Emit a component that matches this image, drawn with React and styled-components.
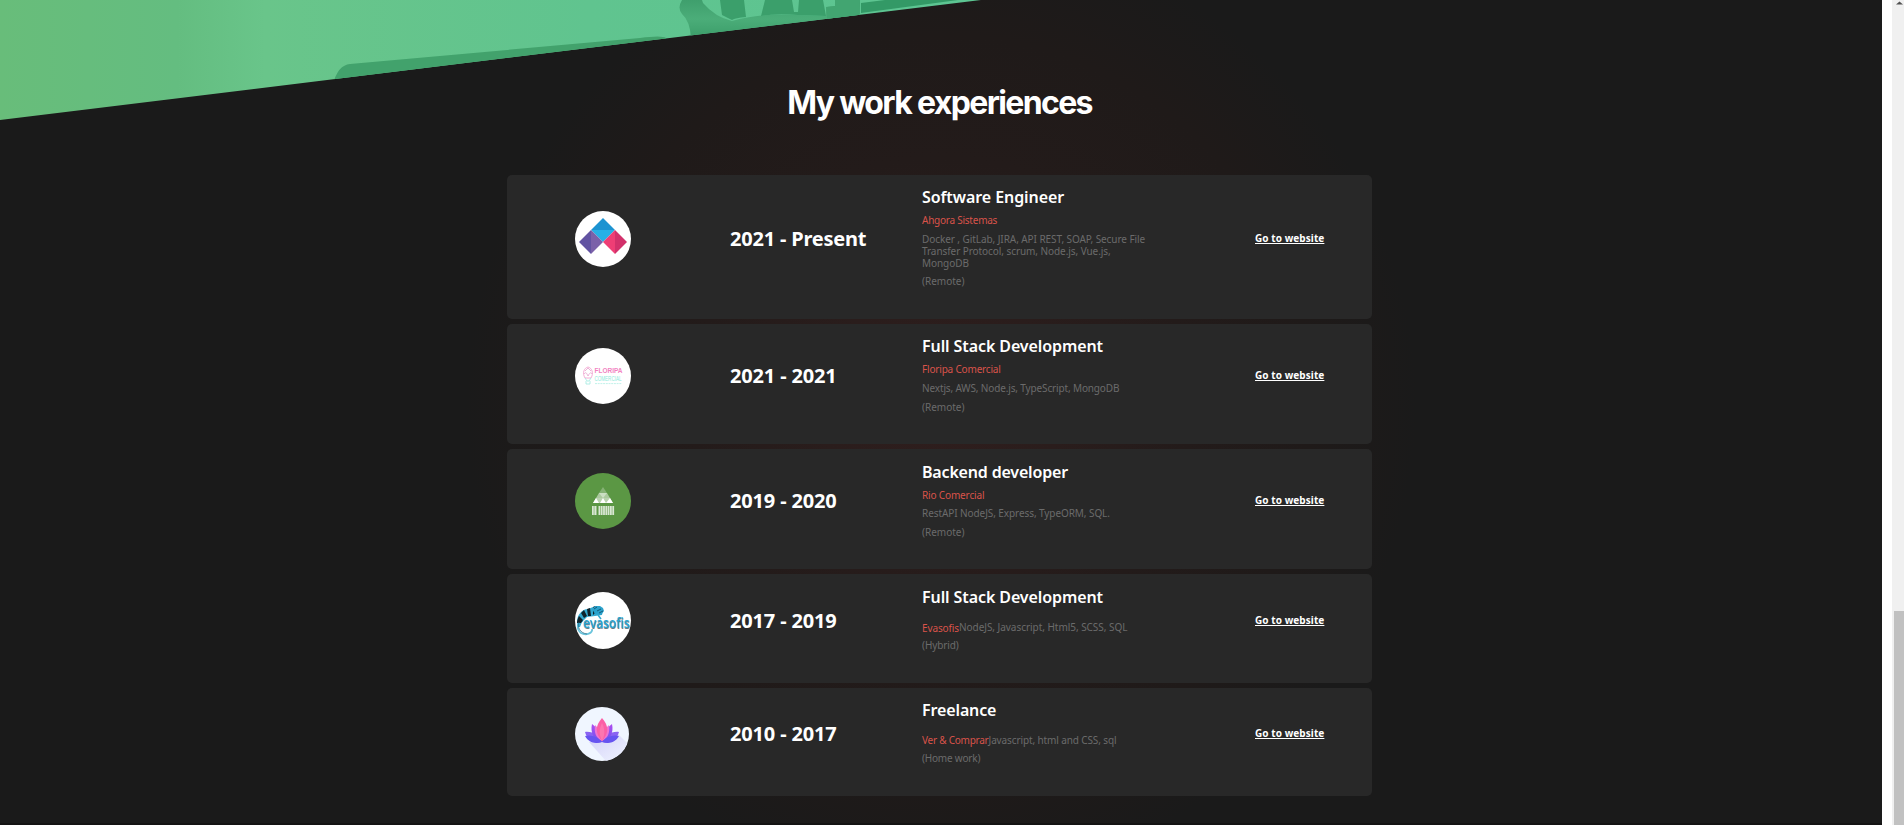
import React from 'react';
import styled, { createGlobalStyle } from 'styled-components';

const GlobalStyle = createGlobalStyle`
  * { box-sizing: border-box; }
  html, body { margin: 0; height: 100%; overflow: hidden; background: #fff; }
  body { font-family: 'Noto Sans', 'Open Sans', sans-serif; }
`;

const Window = styled.div`
  display: flex;
  width: 1904px;
  height: 825px;
  background: #fff;
`;

const Page = styled.main`
  position: relative;
  width: 1882px;
  height: 825px;
  overflow: hidden;
  background:
    radial-gradient(circle 475px at 941px 405px, #2f1e1d 0%, #2a1d1c 25%, #231b1a 52%, #1f1a19 78%, #1a1a1a 100%),
    #1a1a1a;
  border-bottom: 2px solid #141313;
`;

const Banner = styled.svg`
  position: absolute;
  top: 0;
  left: 0;
`;

const Section = styled.section`
  position: relative;
  display: flex;
  flex-direction: column;
  align-items: center;
  padding-top: 82px;
`;

const Heading = styled.h2`
  margin: 0 3px 51px 0;
  height: 42px;
  font: 700 32px/42px Inter, sans-serif;
  letter-spacing: -1.65px;
  color: #fff;
  white-space: nowrap;
`;

const List = styled.div`
  display: flex;
  flex-direction: column;
  gap: 5px;
  width: 865px;
  margin-right: 3px;
`;

const Card = styled.article`
  display: grid;
  grid-template-columns: 155px 192px 229px 1fr;
  height: ${(p) => p.$height}px;
  padding: 0 0 16px 68px;
  align-items: center;
  border-radius: 5px;
  background: #282828;
`;

const Logo = styled.svg`
  display: block;
  overflow: visible;
  width: ${(p) => p.$size || 56}px;
  height: ${(p) => p.$size || 56}px;
`;

const Period = styled.div`
  font-size: 20px;
  line-height: 28px;
  font-weight: 700;
  letter-spacing: ${(p) => p.$track || 0}px;
  color: #fff;
  white-space: nowrap;
`;

const Details = styled.div`
  align-self: start;
  padding-top: ${(p) => p.$top}px;
`;

const Role = styled.h3`
  margin: 0;
  font-size: 16px;
  line-height: 22px;
  font-weight: 600;
  letter-spacing: ${(p) => p.$track || 0}px;
  color: #fff;
  white-space: nowrap;
`;

const Company = styled.div`
  margin-top: 6px;
  font-size: 10px;
  line-height: 12px;
  letter-spacing: ${(p) => p.$track || 0}px;
  color: #d9534a;
  white-space: nowrap;
`;

const Stack = styled.p`
  margin: ${(p) => p.$gap || 7}px 0 0;
  font-size: 10px;
  line-height: 12px;
  letter-spacing: ${(p) => p.$track || 0}px;
  color: #6b6b6b;
`;

const Inline = styled.div`
  display: flex;
  align-items: flex-start;
  margin-top: 13px;
  white-space: nowrap;
  & > ${Company} { margin: ${(p) => p.$drop}px 0 ${(p) => -p.$drop}px; }
  & > ${Stack} { margin-top: 0; }
`;

const Link = styled.a`
  justify-self: start;
  margin: 0 0 2px 104px;
  font-size: 10px;
  line-height: 14px;
  font-weight: 700;
  letter-spacing: 0.07px;
  color: #fff;
  text-decoration: underline;
  white-space: nowrap;
`;

const Gutter = styled.div`
  width: 10px;
  background: #fff;
`;

const Scrollbar = styled.div`
  display: flex;
  flex-direction: column;
  justify-content: space-between;
  width: 12px;
  background: #f0f0f0;
`;

const Arrow = styled.svg`
  display: block;
  width: 12px;
  height: 8px;
`;

const Thumb = styled.div`
  height: 214px;
  margin-left: 2px;
  background: #c1c1c1;
`;

const PrismLogo = () => (
  <Logo viewBox="0 0 56 56">
    <circle cx="28" cy="28" r="28" fill="#fff" />
    <path d="M28 7 40 19H16z" fill="#1c93d1" />
    <path d="M16 19H40L28 31z" fill="#27b0e6" />
    <path d="M16 19V43L4 31z" fill="#6253a2" />
    <path d="M16 19 28 31 16 43z" fill="#7b61a9" />
    <path d="M40 19V43L28 31z" fill="#ee3e75" />
    <path d="M40 19 52 31 40 43z" fill="#d2316b" />
  </Logo>
);

const FloripaLogo = () => (
  <Logo viewBox="0 0 56 56">
    <circle cx="28" cy="28" r="28" fill="#fff" />
    <g fill="none" strokeWidth=".8">
      <path d="M10 30C7 25 9 20 13 19C17 20 19 25 16 30z" stroke="#f19acb" />
      <path d="M10 23 13 20 16 23M9 26C11 23 12 26 13 28C14 26 16 23 17 26" stroke="#e7a0cd" />
      <path d="M10 30 12 33H14L16 30M11 33V36H15V33" stroke="#9eeadf" />
    </g>
    <text x="19.5" y="24.8" fontFamily="Liberation Sans" fontWeight="700" fontSize="7" textLength="28" lengthAdjust="spacingAndGlyphs" fill="#f283c2">FLORIPA</text>
    <text x="19.5" y="32.8" fontFamily="Liberation Sans" fontSize="8" textLength="27" lengthAdjust="spacingAndGlyphs" fill="#8eeadb">COMERCIAL</text>
    <path d="M20 35.6H47" stroke="#c2f2ea" strokeWidth="1" strokeDasharray="2 .7" />
  </Logo>
);

const RioLogo = () => (
  <Logo viewBox="0 0 56 56">
    <circle cx="28" cy="28" r="28" fill="#5b9744" />
    <path d="M28 14 32 20H24z" fill="#86b275" />
    <path d="M24 20H32L35 25H21z" fill="#abc99e" />
    <path d="M24 20 28 25 32 20z" fill="#cbdfc3" />
    <path d="M21 25H35L38 30H18z" fill="#b9d2ae" />
    <path d="M21 25 24 30H18zM35 25 38 30H31zM28 25 31 30H25z" fill="#fff" />
    <path d="M17 37.5H22M23.5 37.5H39.5" stroke="#d9e7d3" strokeWidth="9" strokeDasharray="1.8 .5" />
  </Logo>
);

const EvasofisLogo = () => (
  <Logo viewBox="0 0 57 57" $size={57}>
    <ellipse cx="28" cy="28.5" rx="28" ry="28.5" fill="#fff" />
    <path d="M8 29C2 29 1 37 6 41C11 44 18 41 17 37" fill="none" stroke="#69c4dc" strokeWidth="1.8" />
    <path d="M2 30C2 23 7 17 13 17L18 15 24 16 28 18 27 23 20 24 12 25 7 30 5 35 3 35z" fill="#35a9cf" />
    <path d="M2 31C2 28 3 26 4 24L8 28 6 31zM6 21 9 18 12 24 9 26zM12 17 15 16 16 24 13 24zM18 15 20 14 21 20 18 23z" fill="#10232b" />
    <path d="M17 17 20 14 25 14 28 16 29 19 26 23 20 22z" fill="#2ba2cc" />
    <path d="M19 17 22 15M22 19 26 17M24 21 28 19" stroke="#155a78" strokeWidth="1" />
    <path d="M23 23 26 27" stroke="#35a9cf" strokeWidth="1.5" />
    <path d="M4 30C2 35 5 41 12 42" fill="none" stroke="#2c6981" strokeWidth=".7" />
    <text x="8" y="36.2" fontFamily="Open Sans" fontWeight="600" fontSize="14" textLength="46.5" lengthAdjust="spacingAndGlyphs" fill="#29a4d0" style={{ textShadow: '0.5px 0.5px 0 #6d7d86' }}>evasofis</text>
  </Logo>
);

const LotusLogo = () => (
  <Logo viewBox="0 0 54 54" $size={54}>
    <defs>
      <linearGradient id="petal" x1="0" y1="0" x2="0" y2="1">
        <stop offset="0" stopColor="#b04df0" />
        <stop offset="1" stopColor="#6a55ee" />
      </linearGradient>
      <linearGradient id="shade" x1="0" y1="0" x2="1" y2="1">
        <stop offset="0" stopColor="#d3d0f8" />
        <stop offset="1" stopColor="#f0f5ff" />
      </linearGradient>
      <clipPath id="disc"><circle cx="27" cy="27" r="27" /></clipPath>
    </defs>
    <circle cx="27" cy="27" r="27" fill="#f0f6ff" />
    <path d="M14 35 43 27 54 38 45 54H31z" fill="url(#shade)" clipPath="url(#disc)" />
    <path d="M10 25C18 24 24 29 27 35C20 37 13 35 10 25zM44 25C36 24 30 29 27 35C34 37 41 35 44 25z" fill="#8a63f2" />
    <path d="M17 17C23 21 26 28 27 35C19 33 15 26 17 17zM37 17C31 21 28 28 27 35C35 33 39 26 37 17z" fill="url(#petal)" />
    <path d="M20 18C25 22 27 29 27 34C21 31 19 26 20 18zM34 18C29 22 27 29 27 34C33 31 35 26 34 18z" fill="#ee74d2" />
    <path d="M27 11C34 19 34 26 27 34C20 26 20 19 27 11z" fill="#fb5fa6" />
    <path d="M27 16C30 22 30 28 27 34C24 28 24 22 27 16z" fill="#fd76b0" />
    <path d="M10 29C17 27 24 31 27 35C20 37 14 36 10 29zM44 29C37 27 30 31 27 35C34 37 40 36 44 29z" fill="#6654f0" />
  </Logo>
);

const jobs = [
  { logo: PrismLogo, height: 144, top: 11, placeGap: 6, period: '2021 - Present', role: 'Software Engineer', company: 'Ahgora Sistemas', stack: 'Docker , GitLab, JIRA, API REST, SOAP, Secure File Transfer Protocol, scrum, Node.js, Vue.js, MongoDB', place: '(Remote)', track: [-0.2, -0.08, -0.24, -0.07, 0] },
  { logo: FloripaLogo, height: 120, top: 11, period: '2021 - 2021', role: 'Full Stack Development', company: 'Floripa Comercial', stack: 'Nextjs, AWS, Node.js, TypeScript, MongoDB', place: '(Remote)', track: [-0.16, -0.09, -0.18, -0.14, 0] },
  { logo: RioLogo, height: 120, top: 12, stackGap: 6, period: '2019 - 2020', role: 'Backend developer', company: 'Rio Comercial', stack: 'RestAPI NodeJS, Express, TypeORM, SQL.', place: '(Remote)', track: [-0.16, -0.18, -0.15, -0.08, 0] },
  { logo: EvasofisLogo, height: 109, top: 12, inline: true, drop: 1, placeGap: 6, period: '2017 - 2019', role: 'Full Stack Development', company: 'Evasofis', stack: 'NodeJS, Javascript, Html5, SCSS, SQL', place: '(Hybrid)', track: [-0.16, -0.09, -0.12, -0.04, -0.1] },
  { logo: LotusLogo, height: 108, top: 11, inline: true, drop: 0, placeGap: 6, period: '2010 - 2017', role: 'Freelance', company: 'Ver & Comprar', stack: 'Javascript, html and CSS, sql', place: '(Home work)', track: [-0.16, -0.12, -0.24, -0.12, -0.2] },
];

const Job = ({ job }) => {
  const Mark = job.logo;
  const [periodTrack, roleTrack, companyTrack, stackTrack, placeTrack] = job.track;
  const company = <Company $track={companyTrack}>{job.company}</Company>;
  const stack = <Stack $gap={job.stackGap} $track={stackTrack}>{job.stack}</Stack>;
  return (
    <Card $height={job.height}>
      <Mark />
      <Period $track={periodTrack}>{job.period}</Period>
      <Details $top={job.top}>
        <Role $track={roleTrack}>{job.role}</Role>
        {job.inline ? <Inline $drop={job.drop}>{company}{stack}</Inline> : <>{company}{stack}</>}
        <Stack $gap={job.placeGap} $track={placeTrack}>{job.place}</Stack>
      </Details>
      <Link>Go to website</Link>
    </Card>
  );
};

export default function App() {
  return (
    <Window>
      <GlobalStyle />
      <Page>
        <Banner width="981" height="120" viewBox="0 0 981 120">
          <defs>
            <linearGradient id="green" x1="0" x2="1">
              <stop offset="0" stopColor="#68bd7a" />
              <stop offset=".18" stopColor="#64bd80" />
              <stop offset=".27" stopColor="#69c58a" />
              <stop offset=".6" stopColor="#60c48f" />
              <stop offset="1" stopColor="#5cc592" />
            </linearGradient>
            <linearGradient id="hand" x1="0" y1="0" x2="0" y2="1">
              <stop offset="0" stopColor="#3f9f6d" />
              <stop offset=".5" stopColor="#4bad79" />
              <stop offset="1" stopColor="#3b9d69" />
            </linearGradient>
            <clipPath id="slant"><path d="M0 0H981L0 120z" /></clipPath>
          </defs>
          <g clipPath="url(#slant)">
            <path d="M0 0H981V120H0z" fill="url(#green)" />
            <path d="M333 84Q338 65 350 64L640 38Q662 35 666 38L660 90H333z" fill="#42a26c" />
            <path d="M682 0Q677 8 682 14Q690 21 691 38H760L860 18V0H835V6L826 7V16L798 15Q760 13 732 21Q715 17 703 3L702 0z" fill="url(#hand)" />
            <path d="M720 0H744L746 17Q735 18 732 20L722 15zM765 0H792L794 12H798L799 0H823L826 16L798 15Q776 13 761 16z" fill="#3b9f6b" />
            <path d="M827 7 835 6V0H860L859 20H827z" fill="#42a571" />
            <path d="M861 3 885 0H958L861 13z" fill="#339966" />
          </g>
        </Banner>
        <Section>
          <Heading>My work experiences</Heading>
          <List>
            {jobs.map((job) => <Job key={job.period} job={job} />)}
          </List>
        </Section>
      </Page>
      <Gutter />
      <Scrollbar>
        <Arrow viewBox="0 0 12 8"><path d="M4 4.5 7.5 1.5 11 4.5z" fill="#505050" /></Arrow>
        <Thumb />
      </Scrollbar>
    </Window>
  );
}
